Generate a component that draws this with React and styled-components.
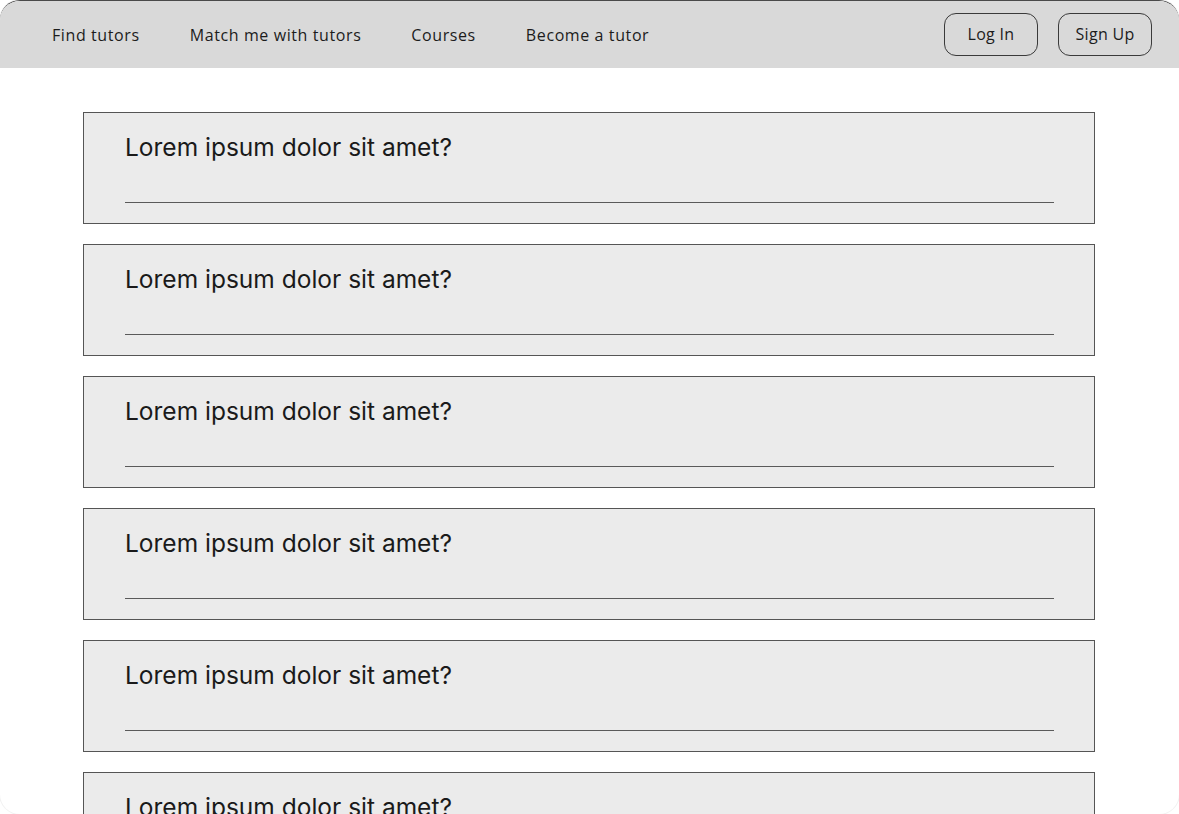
import styled, { createGlobalStyle } from "styled-components";

const GlobalStyle = createGlobalStyle`
  html, body {
    margin: 0;
    padding: 0;
    background: #ffffff;
  }

  * {
    box-sizing: border-box;
  }
`;

const Frame = styled.div`
  width: 1179px;
  height: 814px;
  border-radius: 20px;
  overflow: hidden;
  background: #ffffff;
  border-top: 1px solid #4a4a4a;
  box-shadow: 0 0 0 1px #f2f2f2;
`;

const NavBar = styled.nav`
  height: 67px;
  background: #d9d9d9;
  display: flex;
  align-items: center;
  justify-content: space-between;
  padding: 0 27px 0 52px;
`;

const NavLinks = styled.div`
  display: flex;
  align-items: center;
  gap: 50px;
`;

const NavLink = styled.a`
  font-family: "Open Sans", "Liberation Sans", sans-serif;
  font-size: 16px;
  letter-spacing: 0.6px;
  color: #1c1c1c;
  text-decoration: none;
  cursor: pointer;
`;

const AuthGroup = styled.div`
  display: flex;
  gap: 20px;
`;

const AuthButton = styled.button`
  width: 94px;
  height: 43px;
  border: 1px solid #3a3a3a;
  border-radius: 12px;
  background: transparent;
  font-family: "Open Sans", "Liberation Sans", sans-serif;
  font-size: 16px;
  letter-spacing: 0.3px;
  color: #1c1c1c;
  padding: 0 0 2px;
  cursor: pointer;
`;

const QuestionList = styled.main`
  display: flex;
  flex-direction: column;
  gap: 20px;
  padding: 44px 84px 0 83px;
`;

const QuestionCard = styled.div`
  height: 112px;
  flex-shrink: 0;
  background: #ebebeb;
  border: 1px solid #555555;
  padding: 19px 40px 0 41px;
  display: flex;
  flex-direction: column;
`;

const QuestionText = styled.div`
  font-family: Inter, "Liberation Sans", sans-serif;
  font-size: 24.5px;
  line-height: 30px;
  color: #1a1a1a;
`;

const AnswerLine = styled.div`
  margin-top: 40px;
  height: 1px;
  background: #5a5a5a;
`;

const questions = Array.from({ length: 6 }, () => "Lorem ipsum dolor sit amet?");

export default function App() {
  return (
    <>
      <GlobalStyle />
      <Frame>
        <NavBar>
          <NavLinks>
            <NavLink>Find tutors</NavLink>
            <NavLink>Match me with tutors</NavLink>
            <NavLink>Courses</NavLink>
            <NavLink>Become a tutor</NavLink>
          </NavLinks>
          <AuthGroup>
            <AuthButton>Log In</AuthButton>
            <AuthButton>Sign Up</AuthButton>
          </AuthGroup>
        </NavBar>

        <QuestionList>
          {questions.map((q, i) => (
            <QuestionCard key={i}>
              <QuestionText>{q}</QuestionText>
              <AnswerLine />
            </QuestionCard>
          ))}
        </QuestionList>
      </Frame>
    </>
  );
}
